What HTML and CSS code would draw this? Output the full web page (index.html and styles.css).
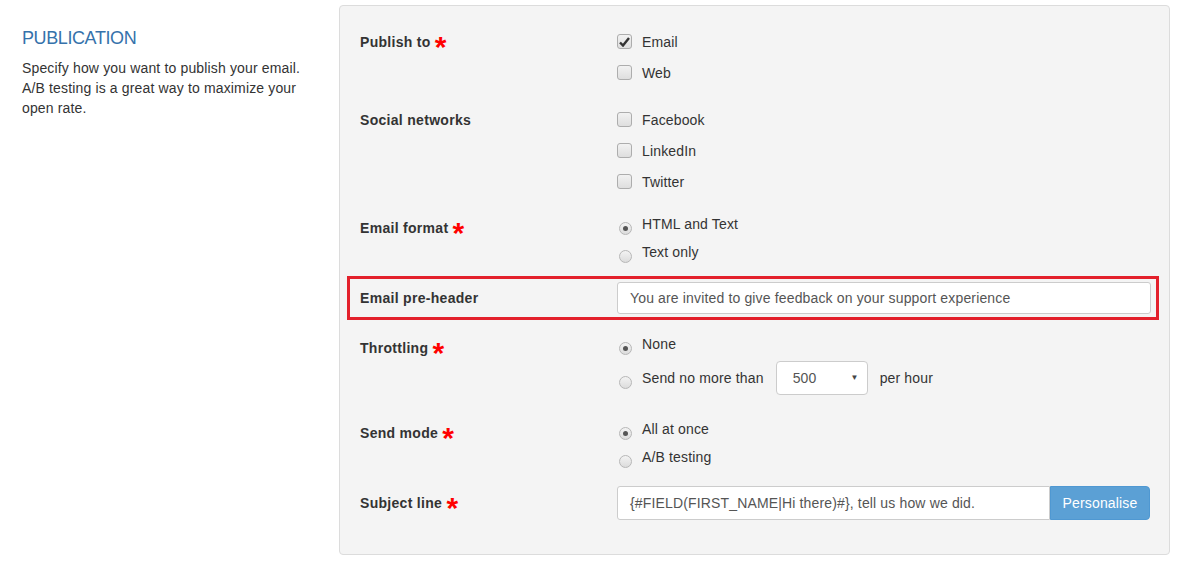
FILE: index.html
```html
<!DOCTYPE html>
<html lang="en">
<head>
    <meta charset="UTF-8">
    <title>Publication</title>
    <link rel="stylesheet" href="styles.css">
</head>
<body>
    <div class="page">
        <div class="intro">
            <h2>PUBLICATION</h2>
            <p>Specify how you want to publish your email. A/B testing is a great way to maximize your open rate.</p>
        </div>

        <div class="panel">
            <div class="row row-publish">
                <div class="label">Publish to <span class="req">*</span></div>
                <div class="options">
                    <div class="option"><span class="check checked"><svg width="11" height="10" viewBox="0 0 11 10"><path d="M1 5.5 L4 8.5 L10 1" fill="none" stroke="#333" stroke-width="2.4"/></svg></span>Email</div>
                    <div class="option"><span class="check"></span>Web</div>
                </div>
            </div>

            <div class="row row-social">
                <div class="label">Social networks</div>
                <div class="options">
                    <div class="option"><span class="check"></span>Facebook</div>
                    <div class="option"><span class="check"></span>LinkedIn</div>
                    <div class="option"><span class="check"></span>Twitter</div>
                </div>
            </div>

            <div class="row row-format">
                <div class="label">Email format <span class="req">*</span></div>
                <div class="options">
                    <div class="option radio-opt"><span class="radio checked"></span>HTML and Text</div>
                    <div class="option radio-opt"><span class="radio"></span>Text only</div>
                </div>
            </div>

            <div class="row row-preheader">
                <div class="label">Email pre-header</div>
                <div class="field">
                    <div class="text-input">You are invited to give feedback on your support experience</div>
                </div>
            </div>

            <div class="row row-throttle">
                <div class="label">Throttling <span class="req">*</span></div>
                <div class="options">
                    <div class="option radio-opt"><span class="radio checked"></span>None</div>
                    <div class="option radio-opt tall"><span class="radio"></span>Send no more than
                        <div class="select">500<span class="caret">&#9660;</span></div>
                        per hour
                    </div>
                </div>
            </div>

            <div class="row row-mode">
                <div class="label">Send mode <span class="req">*</span></div>
                <div class="options">
                    <div class="option radio-opt"><span class="radio checked"></span>All at once</div>
                    <div class="option radio-opt"><span class="radio"></span>A/B testing</div>
                </div>
            </div>

            <div class="row row-subject">
                <div class="label">Subject line <span class="req">*</span></div>
                <div class="field group">
                    <div class="text-input">{#FIELD(FIRST_NAME|Hi there)#}, tell us how we did.</div>
                    <button class="btn">Personalise</button>
                </div>
            </div>
        </div>
    </div>
</body>
</html>
```

FILE: styles.css
```css
* {
    margin: 0;
    padding: 0;
    box-sizing: border-box;
}

body {
    font-family: "Liberation Sans", Arial, sans-serif;
    font-size: 14px;
    letter-spacing: 0.15px;
    color: #333;
    background: #fff;
}

.page {
    display: flex;
    padding-top: 5px;
}

.intro {
    width: 339px;
    padding: 22px 30px 0 22px;
}

.intro h2 {
    font-size: 18px;
    font-weight: normal;
    letter-spacing: -0.4px;
    color: #3572ab;
    line-height: 22px;
    margin-bottom: 9px;
}

.intro p {
    line-height: 20px;
    color: #333;
}

.panel {
    width: 831px;
    height: 550px;
    background: #f4f4f4;
    border: 1px solid #dcdcdc;
    border-radius: 4px;
    padding: 20px 18px 0 20px;
}

.row {
    display: flex;
}

.label {
    width: 257px;
    font-weight: bold;
    height: 31px;
    line-height: 31px;
    padding-top: 1px;
    color: #333;
    letter-spacing: 0.3px;
}

.req {
    color: #f00;
    font-size: 30px;
    vertical-align: -10px;
    line-height: 10px;
}

.options {
    display: flex;
    flex-direction: column;
}

.option {
    display: flex;
    align-items: center;
    height: 31px;
    color: #333;
}

.check {
    width: 15px;
    height: 15px;
    border: 1px solid #adadad;
    border-radius: 3px;
    background: linear-gradient(#f2f2f2, #dedede);
    margin-right: 10px;
    display: flex;
    align-items: center;
    justify-content: center;
}

.radio-opt {
    height: 28px;
}

.radio {
    width: 13px;
    height: 13px;
    border: 1px solid #b7b7b7;
    border-radius: 50%;
    background: linear-gradient(#f3f3f3, #dcdcdc);
    margin: 8px 10px 0 2px;
    display: flex;
    align-items: center;
    justify-content: center;
}

.radio.checked::after {
    content: "";
    width: 5px;
    height: 5px;
    border-radius: 50%;
    background: #555;
}

.row-social {
    margin-top: 16px;
}

.row-format {
    margin-top: 13px;
}

.row-format .label,
.row-throttle .label,
.row-mode .label {
    padding-top: 3px;
}

.row-preheader {
    margin: 10px -8px 0 -13px;
    border: 3px solid #e3202b;
    padding: 3px 5px 3px 10px;
}

.row-preheader .label {
    line-height: 32px;
    height: 32px;
    padding-top: 0;
    width: 257px;
}

.field {
    flex: 1;
    display: flex;
}

.text-input {
    flex: 1;
    height: 32px;
    line-height: 30px;
    background: #fff;
    border: 1px solid #ccc;
    border-radius: 3px;
    padding: 0 12px;
    color: #555;
}

.row-throttle {
    margin-top: 10px;
}

.option.tall {
    height: 36px;
    margin-top: 2px;
}

.select {
    width: 92px;
    height: 34px;
    line-height: 32px;
    background: #fff;
    border: 1px solid #ccc;
    border-radius: 4px;
    margin: 0 12px;
    padding: 0 0 0 16px;
    color: #555;
    position: relative;
}

.caret {
    position: absolute;
    right: 8px;
    top: 0;
    font-size: 8px;
    color: #444;
}

.row-mode {
    margin-top: 19px;
}

.row-subject {
    margin-top: 15px;
}

.row-subject .label {
    height: 34px;
    line-height: 34px;
    padding-top: 0;
}

.group .text-input {
    height: 34px;
    line-height: 32px;
    border-radius: 3px 0 0 3px;
}

.btn {
    width: 100px;
    height: 34px;
    border: 1px solid #4f98d2;
    background: #5ba0d5;
    color: #fff;
    font-family: inherit;
    font-size: 14px;
    letter-spacing: 0.15px;
    border-radius: 0 4px 4px 0;
    margin-right: 1px;
}
```
